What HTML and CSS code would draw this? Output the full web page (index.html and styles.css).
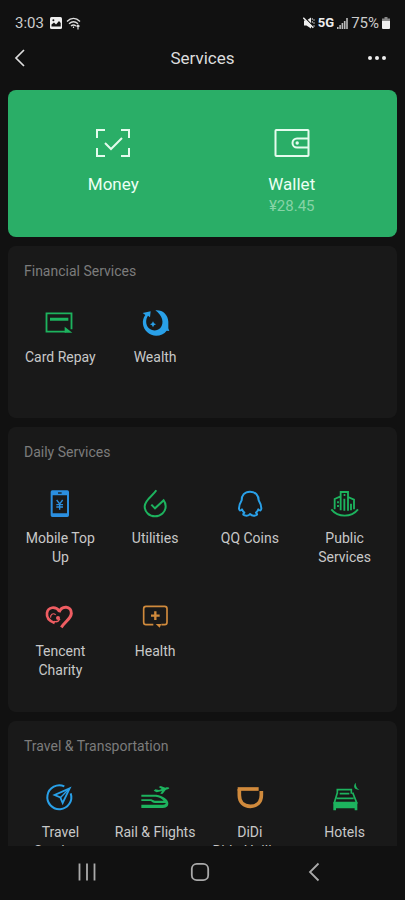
FILE: index.html
```html
<!DOCTYPE html>
<html lang="en">
<head>
<meta charset="utf-8">
<meta name="viewport" content="width=device-width, initial-scale=1">
<title>Services</title>
<link rel="stylesheet" href="styles.css">
</head>
<body>
<div class="status">
  <div class="status-group">
    <span class="clock">3:03</span>
    <svg class="status-icon" viewBox="0 0 12 12" width="12" height="12"><rect width="12" height="12" rx="1.5" fill="#eee"/><path d="M1.5 9.5V7.5L4 5.5l2 2 3-3.5 1.7 2v3.5z" fill="#111"/><circle cx="3.4" cy="3.2" r="1" fill="#111"/></svg>
    <svg class="status-icon wifi" viewBox="0 0 15 13" width="15" height="13" fill="none" stroke="#ddd" stroke-width="1.4"><path d="M1 4.5c4-4 9-4 13 0M3 6.800c3-2.700 6-2.700 9 0M5 9c1.600-1.400 3.400-1.400 5 0"/><path d="M7.500 9.500v1.500M12 12.500V8M10.500 9.500 12 8l1.500 1.500" stroke-width="1.200"/></svg>
  </div>
  <div class="status-group status-right">
    <svg class="status-icon" viewBox="0 0 12 12" width="12" height="12"><path d="M1 3.500h2.500L8 .5v11L3.500 8.500H1z" fill="#eee"/><path d="M1.500.5l9 9" stroke="#111" stroke-width="1.200"/><path d="M.3.800l10 10" stroke="#eee" stroke-width="1.500"/><path d="M9.300 1v6M11 2v9" stroke="#aaa" stroke-dasharray="2 1"/></svg>
    <span class="network">5G</span>
    <svg class="status-icon signal" viewBox="0 0 11 11" width="11" height="11" fill="#bbb"><path d="M0 9h1.600v2H0zM2.300 7h1.600v4H2.300zM4.600 5h1.600v6H4.600zM6.900 3h1.600v8H6.900zM9.200 0h1.600v11H9.200z"/></svg>
    <span class="battery-text">75%</span>
    <svg class="status-icon battery" viewBox="0 0 8 12" width="8" height="12"><path d="M2.500 0h3v1.500H8V4H0V1.500h2.500z" fill="#888"/><path d="M0 4h8v7a1 1 0 0 1-1 1H1a1 1 0 0 1-1-1z" fill="#eee"/></svg>
  </div>
</div>

<header class="header">
  <button class="icon-button" type="button" aria-label="Back">
    <svg viewBox="0 0 12 20" width="12" height="20" fill="none" stroke="#ddd" stroke-width="1.700"><path d="M10 2 2 10l8 8"/></svg>
  </button>
  <h1 class="page-title">Services</h1>
  <button class="icon-button more" type="button" aria-label="More">
    <svg viewBox="0 0 20 6" width="20" height="6" fill="#eee"><circle cx="3" cy="3" r="2"/><circle cx="10" cy="3" r="2"/><circle cx="17" cy="3" r="2"/></svg>
  </button>
</header>

<main class="content">
  <section class="pay-card" aria-label="Payments">
    <a class="pay-item" href="#money">
      <svg class="pay-icon" viewBox="0 0 36 30" width="36" height="30" fill="none" stroke="#e4fbed" stroke-width="2"><path d="M10 2H2v8M26 2h8v8M10 28H2v-8M26 28h8v-8M10 15l6 6 11-11"/></svg>
      <span class="pay-label">Money</span>
    </a>
    <a class="pay-item" href="#wallet">
      <svg class="pay-icon" viewBox="0 0 36 30" width="36" height="30" fill="none" stroke="#e4fbed" stroke-width="2"><rect x="1.500" y="2" width="33" height="26" rx=".8"/><path d="M34 10.500H23a4.500 4.500 0 0 0 0 9h11"/><circle cx="23.200" cy="15" r="1.700" fill="#e4fbed" stroke="none"/></svg>
      <span class="pay-label">Wallet</span>
      <span class="pay-amount">¥28.45</span>
    </a>
  </section>

  <section class="card">
    <h2 class="card-title">Financial Services</h2>
    <div class="grid">
      <a class="item green" href="#card-repay">
        <svg class="icon" viewBox="133 168 96 96"><path d="M198 245H140.500V190H215.500V238" fill="none" stroke="currentColor" stroke-width="5.500"/><path d="M151 203h55v9h-55zM195 230l23 18h-23z" fill="currentColor"/></svg>
        <span>Card Repay</span>
      </a>
      <a class="item blue" href="#wealth">
        <svg class="icon" viewBox="417 168 96 96" fill="currentColor"><path d="M466 181c22-2 38 13 39 34v20l3 8-8-1c-13 18-42 20-58 5-15-14-18-36-6-52l-8-6 24-5-2 18-6-5c-8 11-7 27 2 37 10 10 26 10 35 0 13-15 6-38-15-53z"/><path d="M459 214l3 6 6 3-6 3-3 6-3-6-6-3 6-3z"/></svg>
        <span>Wealth</span>
      </a>
    </div>
  </section>

  <section class="card">
    <h2 class="card-title">Daily Services</h2>
    <div class="grid">
      <a class="item sky" href="#top-up">
        <svg class="icon" viewBox="133 51 96 96"><path fill-rule="evenodd" d="M158 61h45a5 5 0 0 1 5 5v70a5 5 0 0 1-5 5h-45a5 5 0 0 1-5-5V66a5 5 0 0 1 5-5zm1 15v54h43V76z" fill="currentColor"/><path d="M175 69h11" stroke="#191919" stroke-width="4"/><path d="M171 90l9 12 9-12M180 102v17M170 104h20M170 111h20" fill="none" stroke="currentColor" stroke-width="4"/></svg>
        <span>Mobile Top Up</span>
      </a>
      <a class="item green" href="#utilities">
        <svg class="icon" viewBox="417 51 96 96" fill="none" stroke="currentColor" stroke-width="6"><path d="M469 61C459 77 434 90 434 109c0 17 14 30 31 30s32-13 32-30c0-7-2-13-6-18L465 115l-11-11"/></svg>
        <span>Utilities</span>
      </a>
      <a class="item blue" href="#qq-coins">
        <svg class="icon" viewBox="93 51 96 96" fill="none" stroke="currentColor" stroke-width="6" stroke-linejoin="round"><path d="M141 65c-17 0-25 12-25 26-6 10-8 17-8 24 0 8 4 8 9 3 2 5 4 8 7 10-7 6-2 9 7 9 5 0 8-2 10-5 3 3 6 5 11 5 9 0 14-3 7-9 3-2 5-5 7-10 5 5 9 5 9-3 0-7-2-14-8-24 0-14-9-26-26-26z"/></svg>
        <span>QQ Coins</span>
      </a>
      <a class="item green" href="#public-services">
        <svg class="icon" viewBox="377 51 96 96" fill="none" stroke="currentColor" stroke-width="5.500"><path d="M394 118V87l16-7M412 121V66h22v56M434 81l18 8v29M423 86v36M443 101v20M404 94v6M404 105v6M421 75h5M384 118c20 25 60 25 80 0"/></svg>
        <span>Public Services</span>
      </a>
      <a class="item red" href="#charity">
        <svg class="icon" viewBox="133 45 96 96" fill="none" stroke="currentColor"><path d="M165 114C149 108 140 97 142 84c3-18 25-22 38-5" stroke-width="8"/><path d="M153 98c-2-10 7-15 15-9" stroke-width="3.500"/><path d="M178 82c8-22 38-20 37 3-1 16-18 24-30 42" stroke-width="9"/><path d="M163 109c8 3 14 0 18-7" stroke-width="4"/><circle cx="175" cy="99" r="6" fill="currentColor" stroke="none"/></svg>
        <span>Tencent Charity</span>
      </a>
      <a class="item orange" href="#health">
        <svg class="icon" viewBox="417 45 96 96" fill="none" stroke="currentColor" stroke-width="5"><path d="M460 119h-22q-7 0-7-7V71q0-7 7-7h56q7 0 7 7v41q0 7-7 7h-10"/><path d="M466 79v26M453 92h26" stroke-width="7"/><path d="M467 117h17l-5 11z" fill="currentColor" stroke="none"/></svg>
        <span>Health</span>
      </a>
    </div>
  </section>

  <section class="card">
    <h2 class="card-title">Travel &amp; Transportation</h2>
    <div class="grid">
      <a class="item blue" href="#travel">
        <svg class="icon" viewBox="133 213 96 96" fill="none" stroke="currentColor" stroke-width="6"><path d="M194 229a36 36 0 1 0 19 21"/><path d="M210 235l-45 20 17 7 7 17z" stroke-width="5.500"/><path d="M210 235l-28 28" stroke-width="4"/></svg>
        <span>Travel Services</span>
      </a>
      <a class="item green" href="#rail-flights">
        <svg class="icon" viewBox="417 213 96 96" fill="currentColor"><path d="M424 254h45c20 3 36 14 36 26 0 10-7 14-16 14h-65v-10h65c5 0 8-2 8-5H465c-7 0-9-4-13-6h-28v-5h30l10 4h27c-6-7-14-11-24-12h-43z"/><path d="M461 242l5-4 11 2 8-3-9-6 6-3 14 5c6-2 11-1 12 2-1 3-7 3-11 5l-9 11-7 1 5-9-16 4z"/></svg>
        <span>Rail &amp; Flights</span>
      </a>
      <a class="item orange" href="#didi">
        <svg class="icon" viewBox="93 213 96 96" fill="none" stroke="currentColor"><path d="M109 237v19c0 21 14 33 33 33s33-12 33-33v-13" stroke-width="11"/><path d="M104 237h63" stroke-width="11"/></svg>
        <span>DiDi<br>Ride-Hailing</span>
      </a>
      <a class="item green" href="#hotels">
        <svg class="icon" viewBox="377 213 96 96"><path d="M402 251v-12h42v12M402 248l-9 30h67l-12-30M409 251h29M400 265h51" fill="none" stroke="currentColor" stroke-width="5"/><path d="M390 277h72v24h-8v-6h-56v6h-8zM457 218c-9 10-4 22 11 21-7-3-11-10-11-21z" fill="currentColor"/></svg>
        <span>Hotels</span>
      </a>
    </div>
  </section>
</main>

<nav class="system-nav" aria-label="System">
  <button class="nav-button" type="button" aria-label="Recent apps"><svg viewBox="0 0 20 20" width="20" height="20" stroke="#aaa" stroke-width="1.800"><path d="M2.500 1.500v17M10 1.500v17M17.500 1.500v17"/></svg></button>
  <button class="nav-button" type="button" aria-label="Home"><svg viewBox="0 0 20 20" width="20" height="20" fill="none" stroke="#aaa" stroke-width="1.800"><rect x="1.800" y="1.800" width="16.400" height="16.400" rx="5"/></svg></button>
  <button class="nav-button" type="button" aria-label="Back"><svg viewBox="0 0 20 20" width="20" height="20" fill="none" stroke="#aaa" stroke-width="1.800"><path d="M14.500 1.500 6 10l8.500 8.500"/></svg></button>
</nav>
</body>
</html>
```
FILE: styles.css
```css
* {
  box-sizing: border-box;
}

body {
  margin: 0;
  height: 100vh;
  display: flex;
  flex-direction: column;
  overflow: hidden;
  background: #111;
  color: #ccc;
  font-family: Roboto, "Liberation Sans", sans-serif;
  font-size: 14px;
  line-height: 19px;
}

a {
  color: inherit;
  text-decoration: none;
}

button {
  padding: 0;
  border: 0;
  background: none;
  color: inherit;
  cursor: pointer;
}

svg {
  display: block;
  flex: none;
}

.status {
  flex: none;
  display: flex;
  justify-content: space-between;
  padding: 13px 15px 3px;
  line-height: 20px;
}

.status-group {
  display: flex;
  align-items: center;
  gap: 4px;
}

.status-right {
  gap: 3px;
}

.clock {
  margin-right: 2px;
  font-size: 15px;
}

.network {
  color: #eee;
  font-size: 13px;
  font-weight: 700;
}

.battery-text {
  font-size: 15px;
}

.header {
  flex: none;
  display: flex;
  align-items: center;
  justify-content: space-between;
  height: 44px;
  padding: 0 14px;
}

.icon-button {
  display: flex;
  align-items: center;
  width: 32px;
  height: 32px;
}

.more {
  justify-content: flex-end;
  padding-right: 4px;
}

.page-title {
  margin: 0;
  color: #ddd;
  font-size: 17px;
  font-weight: 400;
}

.content {
  flex: 1;
  min-height: 0;
  display: flex;
  flex-direction: column;
  gap: 9px;
  padding: 10px 8px 0;
  overflow: hidden;
}

.pay-card {
  flex: none;
  display: grid;
  grid-template-columns: 1fr 1fr;
  padding: 38px 16px 20px;
  border-radius: 8px;
  background: #2aae67;
}

.pay-item {
  display: flex;
  flex-direction: column;
  align-items: center;
  min-height: 89px;
}

.pay-label {
  margin-top: 14px;
  color: #ecfff4;
  font-size: 17px;
  line-height: 24px;
}

.pay-amount {
  color: #86d3a6;
  font-size: 15px;
  line-height: 20px;
}

.card {
  flex: none;
  padding: 16px 5px 9px;
  border-radius: 8px;
  background: #191919;
}

.card-title {
  margin: 0 11px 16px;
  color: #7c7c7c;
  font-size: 14px;
  font-weight: 400;
  line-height: 18px;
}

.grid {
  display: grid;
  grid-template-columns: repeat(4, 1fr);
  grid-auto-rows: minmax(113px, auto);
}

.item {
  display: flex;
  flex-direction: column;
  align-items: center;
  gap: 10px;
  padding: 10px 6px 0;
  text-align: center;
}

.item span {
  color: #c8c8c8;
}

.icon {
  width: 32px;
  height: 32px;
}

.green {
  color: #1db35e;
}

.blue {
  color: #29a0e8;
}

.sky {
  color: #2b8fe0;
}

.red {
  color: #ef5d62;
}

.orange {
  color: #d08a3c;
}

.system-nav {
  flex: none;
  display: grid;
  grid-template-columns: repeat(3, 1fr);
  height: 54px;
  padding: 0 34px 2px 30px;
  background: #111;
}

.nav-button {
  display: flex;
  align-items: center;
  justify-content: center;
}
```
